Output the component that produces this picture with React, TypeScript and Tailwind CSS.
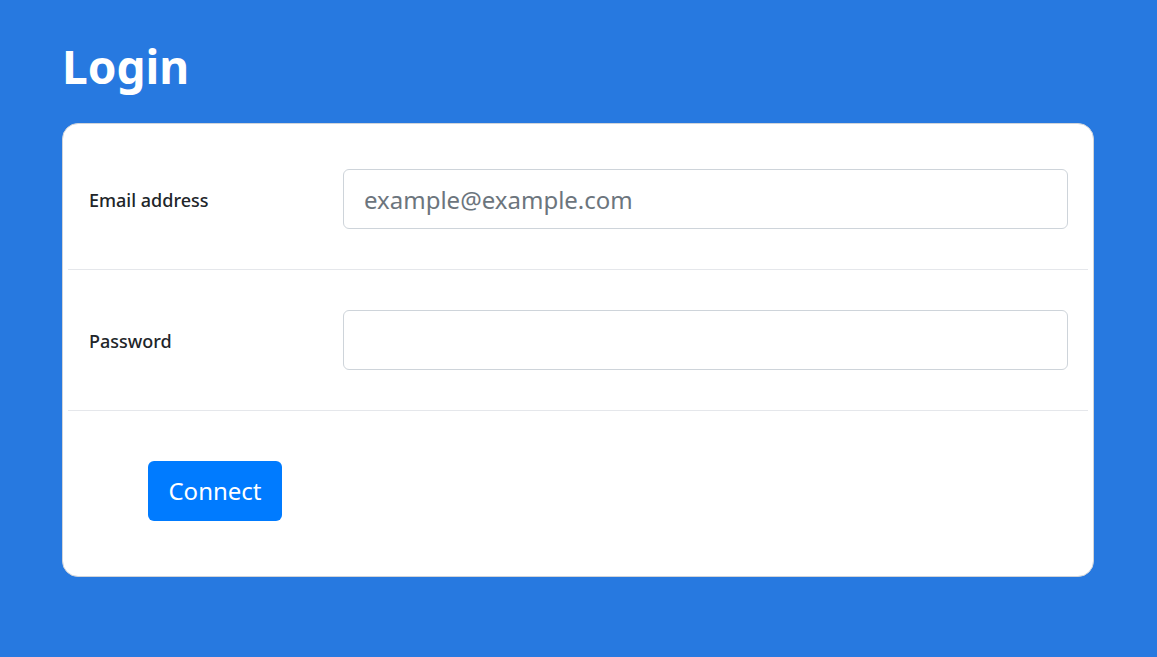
export default function App() {
  return (
    <div className="min-h-[657px] w-full bg-[#2779e0] font-['Noto_Sans',sans-serif] px-[62px] pt-[31px] pb-[80px]">
      <h1 className="text-[46px] font-bold leading-[71px] text-white mb-[21px]">Login</h1>

      <form className="w-[1032px] rounded-[16px] border border-[#d0d4da] bg-white p-[5px]">
        {/* Email */}
        <div className="flex items-center pl-[21px] pr-[20px] py-[40px] border-b border-[#e5e7eb]">
          <label className="w-[254px] pt-[2px] text-[18px] font-medium text-[#212529]">Email address</label>
          <input
            type="email"
            placeholder="example@example.com"
            className="h-[60px] flex-1 rounded-[6px] border border-[#ced4da] px-[20px] text-[24px] text-[#495057] placeholder:text-[#6c757d] outline-none"
          />
        </div>

        {/* Password */}
        <div className="flex items-center pl-[21px] pr-[20px] py-[40px] border-b border-[#e5e7eb]">
          <label className="w-[254px] pt-[2px] text-[18px] font-medium text-[#212529]">Password</label>
          <input
            type="password"
            className="h-[60px] flex-1 rounded-[6px] border border-[#ced4da] px-[20px] text-[24px] outline-none"
          />
        </div>

        <div className="px-[80px] py-[50px]">
          <button
            type="button"
            className="h-[60px] w-[134px] rounded-[6px] bg-[#007bff] text-[24px] text-white"
          >
            Connect
          </button>
        </div>
      </form>
    </div>
  );
}
